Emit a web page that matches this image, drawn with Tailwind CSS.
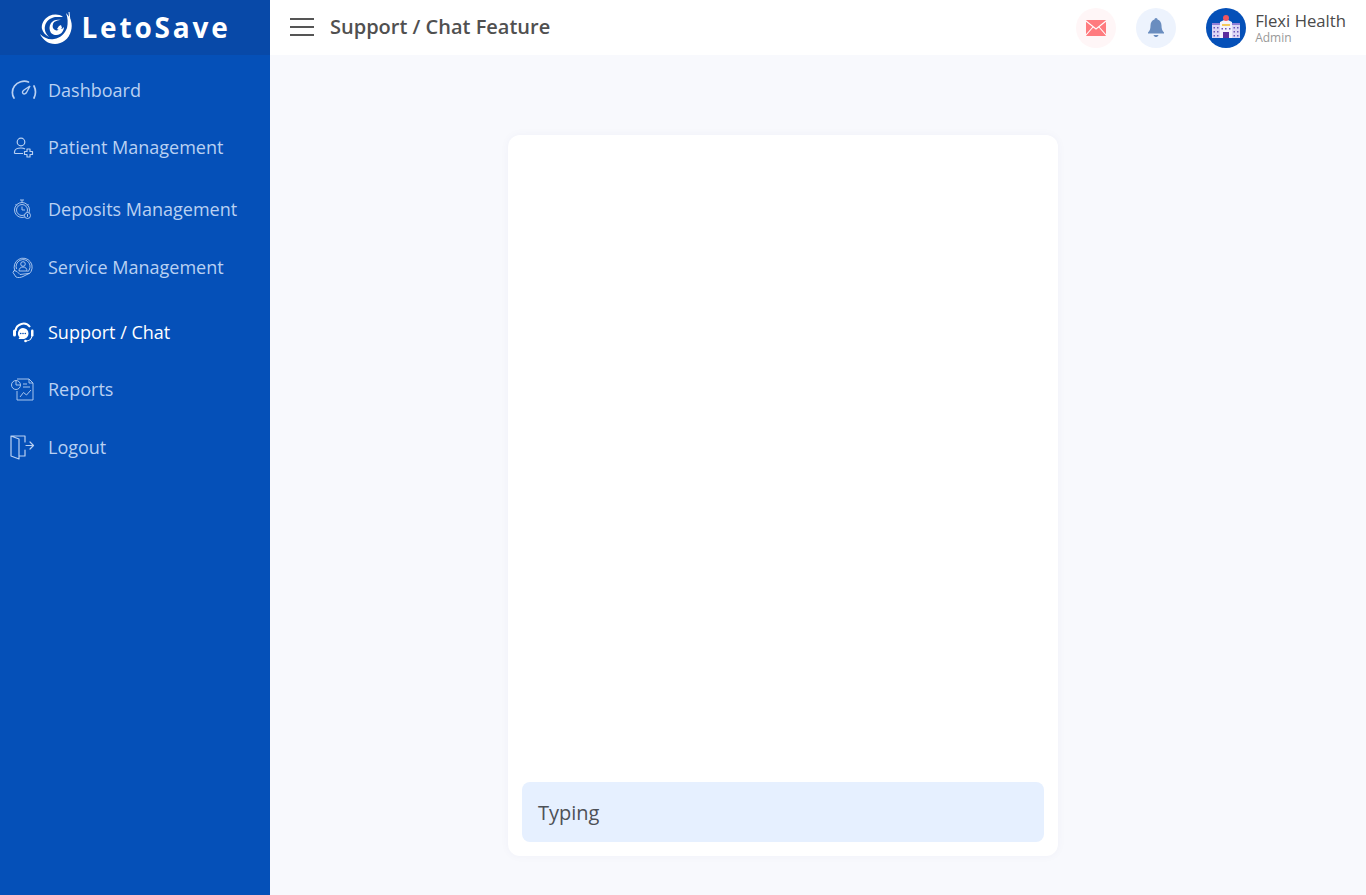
<!DOCTYPE html>
<html>
<head>
    <meta charset="utf-8">
    <script src="https://cdn.jsdelivr.net/npm/@tailwindcss/browser@4"></script>
</head>
<body class="bg-[#f8f9fd] font-['Open_Sans',sans-serif]">
    <div class="flex h-[895px] w-[1366px] overflow-hidden">
        <!-- sidebar -->
        <aside class="w-[270px] shrink-0 bg-[#0550b8] text-[18px] text-[#b9d0f2]">
            <div class="flex h-[55px] items-center justify-center gap-[8px] bg-[#0849a8]">
                <svg class="h-[34px] w-[34px]" viewBox="0 0 34 34" fill="none">
                    <path d="M27 2c5 5 7 11 5 18-2 8-9 13-16 13C9 33 4 29 1 23c4 4 9 6 14 5 7-1 11-6 13-11 1-5 1-10-1-15z" fill="#fff"/>
                    <path d="M24 6c-4-3-9-3-14-1C5 8 2 13 3 18c1 3 3 6 7 8-3-3-5-7-4-11 1-5 5-8 10-9 3 0 6 0 8 0z" fill="#fff"/>
                    <path d="M22 9c-4-1-8 0-10 3-2 3-2 7 0 10 2 2 6 3 9 1 2-1 4-4 4-7l-2 2-2-1c-1 2-3 3-5 2-2-1-3-3-2-6 1-3 5-4 8-4z" fill="#fff"/>
                    <path d="M20 15l2-1 1 3-3 2-2-1z" fill="#fff"/>
                    <path d="M30 1l1 9" stroke="#fff" stroke-width="1"/>
                </svg>
                <span class="mb-[2px] text-[28px] leading-none font-bold tracking-[2.800px] text-white">LetoSave</span>
            </div>
            <nav class="flex flex-col">
                <a class="mt-[15px] flex h-[40px] items-center gap-[11px] pl-[11px]">
                    <svg class="h-[26px] w-[26px] shrink-0" viewBox="0 0 26 26" fill="none" stroke="currentColor" stroke-width="1.700" stroke-linecap="round">
                        <path d="M3 21c-2-3-2.500-8 .5-12 3-4 9-6 14-4"/>
                        <path d="M23 9c2 4 2 8 0 12"/>
                        <path d="M19 9l-6 4c-1.500 1-2 2.500-1 3.500s2.500.5 3.500-1z" stroke-width="1.400"/>
                    </svg>
                    <span>Dashboard</span>
                </a>
                <a class="mt-[17px] flex h-[40px] items-center gap-[11px] pl-[11px]">
                    <svg class="h-[26px] w-[26px] shrink-0" viewBox="0 0 26 26" fill="none" stroke="currentColor" stroke-width="1.200" stroke-linejoin="round">
                        <circle cx="10" cy="8" r="3.800"/>
                        <path d="M3.500 19.500V18c0-2.500 3-4 6.500-4 1.500 0 3 .3 4 1M3.500 19.500h8.500"/>
                        <path d="M16 15h3v2.500h2.500v3H19V23h-3v-2.500h-2.500v-3H16z"/>
                    </svg>
                    <span>Patient Management</span>
                </a>
                <a class="mt-[22px] flex h-[40px] items-center gap-[11px] pl-[11px]">
                    <svg class="h-[26px] w-[26px] shrink-0" viewBox="0 0 26 26" fill="none" stroke="currentColor" stroke-width=".9">
                        <circle cx="11" cy="14" r="7.500"/>
                        <circle cx="11" cy="14" r="5.500"/>
                        <path d="M9 4h4M11 4v2.500M11 10.500V14h3M4.500 8l1.500 1.500M17.500 8L16 9.500"/>
                        <circle cx="16.500" cy="19.500" r="3" fill="#0550b8"/>
                        <path d="M16.500 18v3"/>
                    </svg>
                    <span>Deposits Management</span>
                </a>
                <a class="mt-[18px] flex h-[40px] items-center gap-[11px] pl-[11px]">
                    <svg class="h-[26px] w-[26px] shrink-0" viewBox="0 0 26 26" fill="none" stroke="currentColor" stroke-width=".9">
                        <path d="M4 17a9 9 0 1 1 14 3"/>
                        <path d="M5.500 15a7 7 0 1 1 11 3"/>
                        <circle cx="12" cy="10" r="2.300"/>
                        <path d="M8 17c0-2.500 1.500-4 4-4s4 1.500 4 4z"/>
                        <path d="M3 16.500l-1 2 3 4.500c2 1 5 .5 7-.5l6-3-5 .5-4 .5-3-3z"/>
                    </svg>
                    <span>Service Management</span>
                </a>
                <a class="mt-[25px] flex h-[40px] items-center gap-[11px] pl-[11px] text-white">
                    <svg class="h-[26px] w-[26px] shrink-0" viewBox="0 0 26 26" fill="none">
                        <path d="M4.500 12a8 8 0 0 1 14.500-4" stroke="#fff" stroke-width="2"/>
                        <path d="M21 17c-.5 3-3 5-6 5" stroke="#fff" stroke-width="1.100"/>
                        <rect x="2" y="10.500" width="3" height="7" rx="1.500" fill="#fff"/>
                        <rect x="20" y="10.500" width="2.500" height="7" rx="1.200" fill="#fff"/>
                        <path d="M12 9a5.500 5.500 0 0 1 5.500 5.500c0 3-2.500 5.500-5.500 5.500H7.500l1-1.700A5.500 5.500 0 0 1 12 9z" fill="#fff"/>
                        <circle cx="9.700" cy="14.500" r=".8" fill="#0550b8"/>
                        <circle cx="12" cy="14.500" r=".8" fill="#0550b8"/>
                        <circle cx="14.300" cy="14.500" r=".8" fill="#0550b8"/>
                        <circle cx="14.500" cy="22" r="1.300" fill="#fff"/>
                    </svg>
                    <span>Support / Chat</span>
                </a>
                <a class="mt-[17px] flex h-[40px] items-center gap-[11px] pl-[11px]">
                    <svg class="h-[26px] w-[26px] shrink-0" viewBox="0 0 26 26" fill="none" stroke="currentColor" stroke-width=".9">
                        <path d="M6 3h12l4 4v17H6v-9"/>
                        <path d="M18 3v4h4M12 8h4M12 11h7M9 21l3.500-4.500 3 2.500 4.500-5"/>
                        <circle cx="5" cy="9" r="4.500"/>
                        <path d="M5 4.500V9h4.500"/>
                    </svg>
                    <span>Reports</span>
                </a>
                <a class="mt-[18px] flex h-[40px] items-center gap-[11px] pl-[10px]">
                    <svg class="h-[27px] w-[27px] shrink-0" viewBox="0 0 27 27" fill="none" stroke="currentColor" stroke-width="1.200" stroke-linecap="round" stroke-linejoin="round">
                        <path d="M15 8V2H1v20l8 3V5L1 2M9 22h6v-6"/>
                        <path d="M16 11.500h7.500M20 8l3.500 3.500L20 15"/>
                    </svg>
                    <span>Logout</span>
                </a>
            </nav>
        </aside>

        <div class="flex min-w-0 flex-1 flex-col">
            <!-- top bar -->
            <header class="flex h-[55px] shrink-0 items-center bg-white pl-[20px] pr-[20px]">
                <div class="mb-[1px] flex w-[24px] flex-col gap-[6px]">
                    <span class="h-[2px] bg-[#555555]"></span>
                    <span class="h-[2px] bg-[#555555]"></span>
                    <span class="h-[2px] bg-[#555555]"></span>
                </div>
                <h1 class="mb-[2px] ml-[16px] text-[20px] leading-none font-semibold text-[#505050]">Support / Chat Feature</h1>
                <div class="ml-auto flex items-center">
                    <div class="flex h-[40px] w-[40px] items-center justify-center rounded-full bg-[#fff6f7]">
                        <svg class="h-[16px] w-[20px]" viewBox="0 0 20 16">
                            <rect width="20" height="16" rx="1" fill="#ff7b7f"/>
                            <path d="M0 1l10 8 10-8M0 15l7-8M20 15l-7-8" fill="none" stroke="#fff" stroke-width="1.100"/>
                        </svg>
                    </div>
                    <div class="ml-[20px] flex h-[40px] w-[40px] items-center justify-center rounded-full bg-[#edf3fd]">
                        <svg class="h-[20px] w-[16px]" viewBox="0 0 16 20" fill="#6a8dbf">
                            <path d="M8 0c1 0 1.500.8 1.500 1.500C12 2.300 13.500 4.500 13.500 7.500c0 3 .5 5 2.500 7v1H0v-1c2-2 2.500-4 2.500-7 0-3 1.500-5.200 4-6C6.500.8 7 0 8 0z"/>
                            <path d="M5.500 17h5c-.5 1.500-1.500 2-2.500 2s-2-.5-2.500-2z"/>
                        </svg>
                    </div>
                    <div class="ml-[30px] flex h-[40px] w-[40px] items-center justify-center rounded-full bg-[#0550b8]">
                        <svg class="h-[30px] w-[30px]" viewBox="0 0 30 30">
                            <rect x="1" y="11" width="8" height="14" fill="#dcd6f5"/>
                            <rect x="21" y="11" width="8" height="14" fill="#dcd6f5"/>
                            <rect x="1" y="10" width="8" height="2" fill="#8f7fd6"/>
                            <rect x="21" y="10" width="8" height="2" fill="#8f7fd6"/>
                            <path d="M9 9l6-3 6 3v16H9z" fill="#f4f2fd"/>
                            <circle cx="15" cy="5" r="3" fill="#f0555f"/>
                            <rect x="11" y="11" width="8" height="2" fill="#f4c95d"/>
                            <rect x="12" y="19" width="6" height="6" fill="#5b2d9e"/>
                            <path d="M2.500 14h1.500v1.500H2.500zM6 14h1.500v1.500H6zM2.500 18h1.500v1.500H2.500zM6 18h1.500v1.500H6zM2.500 22h1.500v1.500H2.500zM6 22h1.500v1.500H6zM22.500 14h1.500v1.500h-1.500zM26 14h1.500v1.500H26zM22.500 18h1.500v1.500h-1.500zM26 18h1.500v1.500H26zM22.500 22h1.500v1.500h-1.500zM26 22h1.500v1.500H26zM10.500 15h1.500v1.500h-1.500zM14 15h1.500v1.500H14zM18 15h1.500v1.500H18z" fill="#6a55b8"/>
                        </svg>
                    </div>
                    <div class="ml-[9px] flex flex-col">
                        <span class="text-[16.700px] leading-[20px] font-medium text-[#4a4a4a]">Flexi Health</span>
                        <span class="text-[12px] leading-[14px] text-[#999999]">Admin</span>
                    </div>
                </div>
            </header>

            <!-- chat card -->
            <main class="flex flex-1 justify-center pt-[80px] pr-[70px]">
                <section class="flex h-[721px] w-[550px] flex-col justify-end rounded-[12px] bg-white p-[14px] shadow-[0_0_10px_rgba(40,60,120,0.04)]">
                    <div class="flex h-[60px] items-center rounded-[8px] bg-[#e6f0ff] pt-[1px] pl-[16px] text-[20px] text-[#4d5157]">Typing</div>
                </section>
            </main>
        </div>
    </div>
</body>
</html>
